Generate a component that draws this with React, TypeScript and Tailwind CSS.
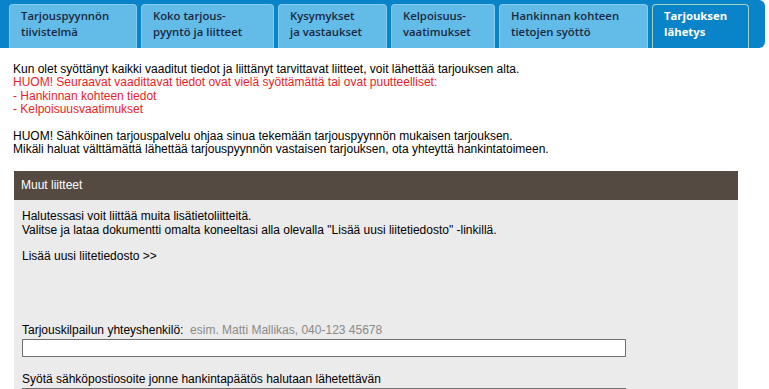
import React from 'react';

// Tab data
interface Tab {
  label: string[];
  width: string;
  active?: boolean;
}

const tabs: Tab[] = [
  { label: ['Tarjouspyynnön', 'tiivistelmä'], width: 'w-[128px]' },
  { label: ['Koko tarjous-', 'pyyntö ja liitteet'], width: 'w-[133px]' },
  { label: ['Kysymykset', 'ja vastaukset'], width: 'w-[109px]' },
  { label: ['Kelpoisuus-', 'vaatimukset'], width: 'w-[104px]' },
  { label: ['Hankinnan kohteen', 'tietojen syöttö'], width: 'w-[149px]' },
  { label: ['Tarjouksen', 'lähetys'], width: 'w-[97px]', active: true },
];

const App = () => {
  return (
    <div className="w-[769px] h-[389px] overflow-hidden bg-white font-['Liberation_Sans',Arial,sans-serif] text-[12px] leading-[13.33px] text-black">
      {/* Tab bar */}
      <div className="flex items-end gap-[4px] w-[765px] h-[48px] pl-[9px] bg-[#0a84c8] rounded-r-[6px]">
        {tabs.map((tab, i) => (
          <div
            key={i}
            className={
              tab.active
                ? `${tab.width} h-[44px] rounded-t-[4px] border border-b-0 border-[#9fd4c4] bg-[#0a84c8] pl-[11px] pt-[3px] font-['Open_Sans',sans-serif] text-[11.3px] leading-[16px] font-bold text-white`
                : `${tab.width} h-[44px] rounded-t-[4px] border border-b-0 border-[#86ccef] bg-[#63bbe8] pl-[11px] pt-[3px] font-['Open_Sans',sans-serif] text-[11.3px] leading-[16px] font-semibold text-[#182a40]`
            }
          >
            {tab.label.map((line, j) => (
              <div key={j} className="whitespace-nowrap">{line}</div>
            ))}
          </div>
        ))}
      </div>

      {/* Info text */}
      <div className="pl-[13px] pt-[15px]">
        <div>Kun olet syöttänyt kaikki vaaditut tiedot ja liittänyt tarvittavat liitteet, voit lähettää tarjouksen alta.</div>
        <div className="text-[#ee1c25]">
          <div>HUOM! Seuraavat vaadittavat tiedot ovat vielä syöttämättä tai ovat puutteelliset:</div>
          <div>- Hankinnan kohteen tiedot</div>
          <div>- Kelpoisuusvaatimukset</div>
        </div>
        <div className="mt-[13.33px]">HUOM! Sähköinen tarjouspalvelu ohjaa sinua tekemään tarjouspyynnön mukaisen tarjouksen.</div>
        <div>Mikäli haluat välttämättä lähettää tarjouspyynnön vastaisen tarjouksen, ota yhteyttä hankintatoimeen.</div>
      </div>

      {/* Other attachments */}
      <div className="ml-[14px] mt-[15px] w-[724px]">
        <div className="flex items-center h-[29px] bg-[#554a42] pl-[7px] text-white">Muut liitteet</div>
        <div className="bg-[#ebebeb] pl-[8px] pt-[10px] pb-[20px]">
          <div>Halutessasi voit liittää muita lisätietoliitteitä.</div>
          <div>Valitse ja lataa dokumentti omalta koneeltasi alla olevalla "Lisää uusi liitetiedosto" -linkillä.</div>
          <div className="mt-[13.33px]">
            <a href="#" className="text-black">Lisää uusi liitetiedosto &gt;&gt;</a>
          </div>

          <div className="mt-[60px]">
            Tarjouskilpailun yhteyshenkilö:&nbsp; <span className="text-[#8a8a8a]">esim. Matti Mallikas, 040-123 45678</span>
          </div>
          <input type="text" className="block mt-[2px] w-[604px] h-[18px] border border-[#6f6f6f] bg-white outline-none" />

          <div className="mt-[16px]">Syötä sähköpostiosoite jonne hankintapäätös halutaan lähetettävän</div>
          <input type="text" className="block mt-[2px] w-[604px] h-[18px] border border-[#6f6f6f] bg-white outline-none" />
        </div>
      </div>
    </div>
  );
};

export default App;
